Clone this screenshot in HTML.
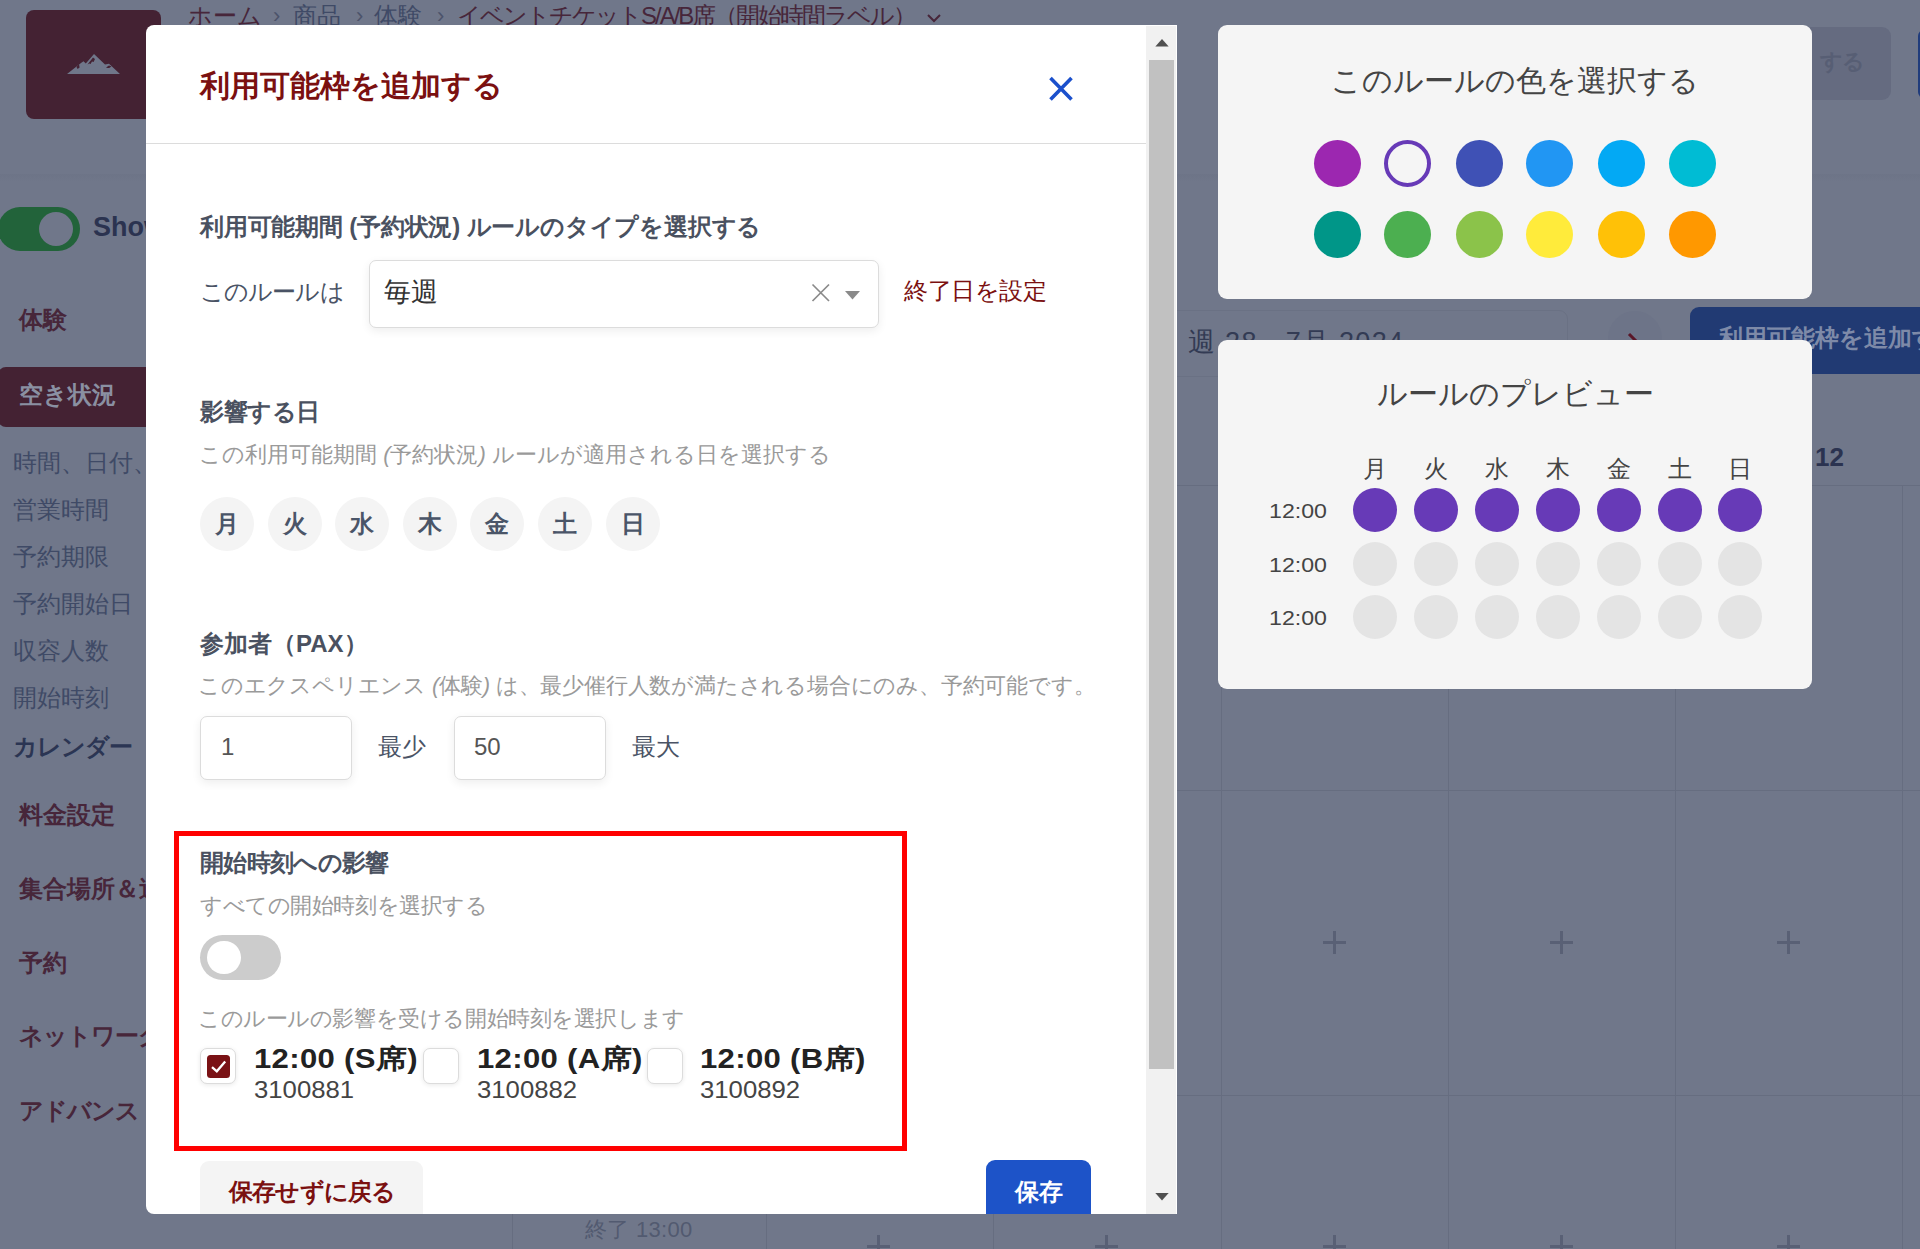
<!DOCTYPE html>
<html lang="ja">
<head>
<meta charset="utf-8">
<title>利用可能枠を追加する</title>
<style>
*{box-sizing:border-box;margin:0;padding:0}
html,body{width:1920px;height:1249px;overflow:hidden}
body{background:#70778a;font-family:"Liberation Sans",sans-serif;position:relative;color:#333}
.abs{position:absolute;white-space:nowrap}
.t{position:absolute;white-space:nowrap;line-height:40px;height:40px}
/* ---------- dimmed background page ---------- */
.bg-sub{font-size:24px;color:#3f4a66;left:13px}
.bg-main{font-size:24px;font-weight:bold;color:#47263a;left:19px}
.vline{position:absolute;width:1px;background:#666d80}
.hline{position:absolute;height:1px;background:#666d80}
.plus{position:absolute;width:23px;height:23px}
.plus:before{content:"";position:absolute;left:0;top:10.25px;width:23px;height:2.5px;background:#596075}
.plus:after{content:"";position:absolute;left:10.25px;top:0;width:2.5px;height:23px;background:#596075}
/* ---------- modal ---------- */
#modal{position:absolute;left:146px;top:25px;width:1031px;height:1189px;background:#fff;border-radius:8px 0 0 8px;overflow:hidden}
.h{font-size:24px;font-weight:bold;color:#4a5160}
.sub{font-size:22px;color:#9a9a9a}
.lbl{font-size:24px;color:#4a5365}
.inp{position:absolute;background:#fff;border:1.5px solid #dcdcdc;border-radius:7px;box-shadow:0 3px 10px rgba(0,0,0,.07)}
.day{position:absolute;top:472px;width:54px;height:54px;border-radius:50%;background:#f4f4f4;font-size:24px;font-weight:bold;color:#4a5568;text-align:center;line-height:54px}
.cb{position:absolute;top:1023px;width:36px;height:36px;border:1.5px solid #dcdcdc;border-radius:7px;background:#fff;box-shadow:0 1px 5px rgba(0,0,0,.09)}
.st1{font-size:27px;font-weight:bold;color:#222;letter-spacing:.3px;line-height:30px;height:30px;transform:scaleX(1.15);transform-origin:0 50%}
.st2{font-size:24.5px;color:#444;line-height:30px;height:30px;transform:scaleX(1.05);transform-origin:0 50%}
/* ---------- right panels ---------- */
.panel{position:absolute;left:1218px;width:594px;background:#f5f5f5;border-radius:9px}
.ptitle{font-size:30px;color:#444;width:594px;text-align:center;left:0}
.cc{position:absolute;width:47px;height:47px;border-radius:50%;margin:.5px 0 0 .5px}
.pc{position:absolute;width:44px;height:44px;border-radius:50%;background:#e4e4e4}
.pc.on{background:#673ab7}
.pd{position:absolute;font-size:24px;color:#444;width:44px;text-align:center;line-height:30px;height:30px;top:114px}
.pt{position:absolute;font-size:20.5px;color:#444;left:51px;margin-top:1px;line-height:30px;height:30px;transform:scaleX(1.13);transform-origin:0 50%}
</style>
</head>
<body>

<!-- ================= BACKGROUND (dimmed page) ================= -->
<div id="bg">
  <!-- header shadow -->
  <div class="abs" style="left:0;top:174px;width:1920px;height:8px;background:linear-gradient(#6d7487,#70778a)"></div>

  <!-- logo -->
  <div class="abs" style="left:25.6px;top:10.4px;width:135.6px;height:108.4px;background:#442233;border-radius:8px"></div>
  <svg class="abs" style="left:67px;top:53px" width="54" height="22" viewBox="0 0 54 22">
    <path d="M0 21 L14 10 L16.5 8.3 L18.8 10.4 L27 1 L38 11.4 L42 10.8 L53 21 Z" fill="#70778a"/>
    <path d="M9.5 14 L12 11 L12.6 14.4 L10.6 16 Z M20.5 11.5 L26 4.6 L28 6 L26.6 9 L25 8.5 L23.6 11 L22.4 10.4 Z M39 14.6 L42 12.6 L44.5 13.4 L42.2 15 L40.5 15 Z" fill="#442233"/>
  </svg>

  <!-- breadcrumb -->
  <div class="t" style="left:188px;top:-4px;font-size:24px;color:#47263a">ホーム</div>
  <div class="t" style="left:273px;top:-4px;font-size:22px;color:#4c536a">›</div>
  <div class="t" style="left:293px;top:-4px;font-size:24px;color:#3f4a66">商品</div>
  <div class="t" style="left:356px;top:-4px;font-size:22px;color:#4c536a">›</div>
  <div class="t" style="left:374px;top:-4px;font-size:24px;color:#3f4a66">体験</div>
  <div class="t" style="left:437px;top:-4px;font-size:22px;color:#4c536a">›</div>
  <div class="t" style="left:457px;top:-4px;font-size:24px;color:#47263a;letter-spacing:-2px">イベントチケットS/A/B席（開始時間ラベル）</div>
  <svg class="abs" style="left:926px;top:12px" width="16" height="12" viewBox="0 0 16 12"><path d="M2 3 L8 9 L14 3" fill="none" stroke="#47263a" stroke-width="2"/></svg>

  <!-- top right header buttons -->
  <div class="abs" style="left:1700px;top:27px;width:191px;height:73px;background:#656b80;border-radius:9px"></div>
  <div class="t" style="left:1820px;top:42px;font-size:22px;font-weight:bold;color:#575e74;letter-spacing:-1px">する</div>
  <div class="abs" style="left:1918px;top:30px;width:6px;height:68px;background:#203c7c;border-radius:6px 0 0 6px"></div>

  <!-- show toggle -->
  <div class="abs" style="left:-2px;top:207px;width:82px;height:44px;border-radius:22px;background:#22633a"></div>
  <div class="abs" style="left:39px;top:212px;width:34px;height:34px;border-radius:50%;background:#70778a"></div>
  <div class="t" style="left:93px;top:207px;font-size:27px;font-weight:bold;color:#2b3350">Show</div>

  <!-- sidebar -->
  <div class="t bg-main" style="top:300px">体験</div>
  <div class="abs" style="left:-2px;top:367px;width:170px;height:60px;background:#442233;border-radius:8px"></div>
  <div class="t" style="left:19px;top:375px;font-size:24px;font-weight:bold;color:#8a90a2">空き状況</div>
  <div class="t bg-sub" style="top:443px">時間、日付、</div>
  <div class="t bg-sub" style="top:490px">営業時間</div>
  <div class="t bg-sub" style="top:537px">予約期限</div>
  <div class="t bg-sub" style="top:584px">予約開始日</div>
  <div class="t bg-sub" style="top:631px">収容人数</div>
  <div class="t bg-sub" style="top:678px">開始時刻</div>
  <div class="t" style="left:13px;top:727px;font-size:24px;font-weight:bold;color:#2b3553;letter-spacing:-1px">カレンダー</div>
  <div class="t bg-main" style="top:795px">料金設定</div>
  <div class="t bg-main" style="top:869px">集合場所＆送</div>
  <div class="t bg-main" style="top:943px">予約</div>
  <div class="t bg-main" style="top:1016px;letter-spacing:-1px">ネットワーク</div>
  <div class="t bg-main" style="top:1091px;letter-spacing:-1px">アドバンス</div>

  <!-- calendar header -->
  <div class="abs" style="left:1100px;top:310px;width:468px;height:67px;border:1px solid #6a7184;border-radius:9px"></div>
  <div class="t" style="left:1188px;top:322px;font-size:27px;color:#333b54;letter-spacing:1.3px">週 28 - 7月 2024</div>
  <div class="abs" style="left:1608px;top:311px;width:54px;height:54px;border-radius:50%;background:#6d7488"></div>
  <svg class="abs" style="left:1624px;top:331px" width="20" height="24" viewBox="0 0 20 24"><path d="M5 3 L14 12 L5 21" fill="none" stroke="#5a1628" stroke-width="3"/></svg>
  <div class="abs" style="left:1690px;top:307px;width:240px;height:67px;background:#213a73;border-radius:9px"></div>
  <div class="t" style="left:1719px;top:318px;font-size:24px;font-weight:bold;color:#7e8aa8">利用可能枠を追加する</div>
  <div class="t" style="left:1815px;top:437px;font-size:26px;font-weight:bold;color:#2b3350">12</div>

  <!-- calendar grid -->
  <div class="hline" style="left:1177px;top:485px;width:743px"></div>
  <div class="hline" style="left:1177px;top:790px;width:743px"></div>
  <div class="hline" style="left:1177px;top:1095px;width:743px"></div>
  <div class="vline" style="left:512px;top:1200px;height:49px"></div>
  <div class="vline" style="left:766px;top:1200px;height:49px"></div>
  <div class="vline" style="left:993px;top:1200px;height:49px"></div>
  <div class="vline" style="left:1221px;top:485px;height:764px"></div>
  <div class="vline" style="left:1448px;top:485px;height:764px"></div>
  <div class="vline" style="left:1675px;top:485px;height:764px"></div>
  <div class="vline" style="left:1902px;top:485px;height:764px"></div>
  <div class="plus" style="left:1323px;top:931px"></div>
  <div class="plus" style="left:1550px;top:931px"></div>
  <div class="plus" style="left:1777px;top:931px"></div>
  <div class="plus" style="left:867px;top:1235px"></div>
  <div class="plus" style="left:1095px;top:1235px"></div>
  <div class="plus" style="left:1323px;top:1235px"></div>
  <div class="plus" style="left:1550px;top:1235px"></div>
  <div class="plus" style="left:1777px;top:1235px"></div>
  <div class="t" style="left:585px;top:1210px;font-size:22px;color:#525a70;letter-spacing:.3px">終了 13:00</div>
</div>

<!-- ================= MODAL ================= -->
<div id="modal">
  <!-- coordinates inside modal are page coords minus (146,25) -->
  <!-- header -->
  <div class="t" style="left:54px;top:41px;font-size:30px;font-weight:bold;color:#7b1010">利用可能枠を追加する</div>
  <svg class="abs" style="left:900px;top:48.5px" width="30" height="30" viewBox="0 0 30 30"><path d="M4.5 4 L25.5 25.5 M25.5 4 L4.5 25.5" fill="none" stroke="#1b50cc" stroke-width="3.6" stroke-linecap="butt"/></svg>
  <div class="abs" style="left:0;top:118px;width:1000px;height:1px;background:#dcdcdc"></div>

  <!-- rule type -->
  <div class="t h" style="left:54px;top:182px;letter-spacing:-0.2px">利用可能期間 (予約状況) ルールのタイプを選択する</div>
  <div class="t lbl" style="left:54px;top:247px;letter-spacing:-0.9px">このルールは</div>
  <div class="inp" style="left:223px;top:235px;width:510px;height:68px"></div>
  <div class="t" style="left:238px;top:247px;font-size:27px;color:#333">毎週</div>
  <svg class="abs" style="left:665px;top:258px" width="20" height="20" viewBox="0 0 20 20"><path d="M1.5 1.5 L18 18 M18 1.5 L1.5 18" fill="none" stroke="#8a8a8a" stroke-width="1.7"/></svg>
  <svg class="abs" style="left:699px;top:266px" width="16" height="9" viewBox="0 0 16 9"><path d="M0 0 L15 0 L7.5 8.5 Z" fill="#8a8a8a"/></svg>
  <div class="t" style="left:758px;top:246px;font-size:24px;color:#7b1010;letter-spacing:-0.5px">終了日を設定</div>

  <!-- affected days -->
  <div class="t h" style="left:54px;top:367px;letter-spacing:-0.5px">影響する日</div>
  <div class="t sub" style="left:53px;top:410px">この利用可能期間 <i>(</i>予約状況<i>)</i> ルールが適用される日を選択する</div>
  <div class="day" style="left:54px">月</div>
  <div class="day" style="left:121.6px">火</div>
  <div class="day" style="left:189.2px">水</div>
  <div class="day" style="left:256.8px">木</div>
  <div class="day" style="left:324.4px">金</div>
  <div class="day" style="left:392px">土</div>
  <div class="day" style="left:459.6px">日</div>

  <!-- pax -->
  <div class="t h" style="left:54px;top:599px">参加者（PAX）</div>
  <div class="t sub" style="left:52px;top:641px;letter-spacing:-0.2px">このエクスペリエンス <i>(</i>体験<i>)</i> は、最少催行人数が満たされる場合にのみ、予約可能です。</div>
  <div class="inp" style="left:54px;top:690.5px;width:152px;height:64px"></div>
  <div class="t" style="left:75px;top:702px;font-size:24px;color:#555">1</div>
  <div class="t lbl" style="left:232px;top:702px">最少</div>
  <div class="inp" style="left:308px;top:690.5px;width:152px;height:64px"></div>
  <div class="t" style="left:328px;top:702px;font-size:24px;color:#555">50</div>
  <div class="t lbl" style="left:486px;top:702px">最大</div>

  <!-- start time impact (red highlight box) -->
  <div class="abs" style="left:27.8px;top:805.8px;width:733.2px;height:320.7px;border:5px solid #ff0000"></div>
  <div class="t h" style="left:54px;top:818px;letter-spacing:-0.7px">開始時刻への影響</div>
  <div class="t sub" style="left:54px;top:861px;letter-spacing:-0.42px">すべての開始時刻を選択する</div>
  <div class="abs" style="left:54px;top:910px;width:81px;height:45px;border-radius:23px;background:#cccccc"></div>
  <div class="abs" style="left:61px;top:915.6px;width:33.5px;height:33.5px;border-radius:50%;background:#fff"></div>
  <div class="t sub" style="left:52px;top:973.5px;letter-spacing:-0.42px">このルールの影響を受ける開始時刻を選択します</div>

  <div class="cb" style="left:54px"></div>
  <div class="abs" style="left:61.3px;top:1030px;width:23px;height:22.5px;border-radius:3.5px;background:#7a1215"></div>
  <svg class="abs" style="left:61.3px;top:1030px" width="24" height="24" viewBox="0 0 24 24"><path d="M5 12.1 L9.8 16.3 L18.2 6.4" fill="none" stroke="#fff" stroke-width="2.3"/></svg>
  <div class="abs st1" style="left:108px;top:1019px">12:00 (S席)</div>
  <div class="abs st2" style="left:108px;top:1050px">3100881</div>

  <div class="cb" style="left:277px"></div>
  <div class="abs st1" style="left:331px;top:1019px">12:00 (A席)</div>
  <div class="abs st2" style="left:331px;top:1050px">3100882</div>

  <div class="cb" style="left:501px"></div>
  <div class="abs st1" style="left:554px;top:1019px">12:00 (B席)</div>
  <div class="abs st2" style="left:554px;top:1050px">3100892</div>

  <!-- footer buttons -->
  <div class="abs" style="left:54px;top:1136px;width:223px;height:70px;background:#f4f4f4;border-radius:9px"></div>
  <div class="t" style="left:83px;top:1147px;font-size:24px;font-weight:bold;color:#7b1010;letter-spacing:-0.8px">保存せずに戻る</div>
  <div class="abs" style="left:840px;top:1135px;width:105px;height:70px;background:#1d53c8;border-radius:9px"></div>
  <div class="t" style="left:869px;top:1147px;font-size:24px;font-weight:bold;color:#fff">保存</div>

  <!-- scrollbar -->
  <div class="abs" style="left:1000px;top:1px;width:30px;height:1188px;background:#f1f1f1"></div>
  <div class="abs" style="left:1003px;top:35px;width:25px;height:1009px;background:#c1c1c1"></div>
  <svg class="abs" style="left:1008.5px;top:13.5px" width="14" height="8" viewBox="0 0 15 9"><path d="M0 8.5 L7.5 0 L15 8.5 Z" fill="#505050"/></svg>
  <svg class="abs" style="left:1008.5px;top:1167.5px" width="14" height="8" viewBox="0 0 15 9"><path d="M0 0 L15 0 L7.5 8.5 Z" fill="#505050"/></svg>
</div>

<!-- ================= RIGHT PANELS ================= -->
<div class="panel" id="colors" style="top:25px;height:274px">
  <div class="t ptitle" style="top:36px">このルールの色を選択する</div>
  <div class="cc" style="left:95.2px;top:114.7px;background:#9c27b0"></div>
  <div class="cc" style="left:165.7px;top:114.7px;border:4.5px solid #673ab7;background:#f5f5f5"></div>
  <div class="cc" style="left:237.4px;top:114.7px;background:#3f51b5"></div>
  <div class="cc" style="left:307.9px;top:114.7px;background:#2196f3"></div>
  <div class="cc" style="left:379.5px;top:114.7px;background:#03a9f4"></div>
  <div class="cc" style="left:450.0px;top:114.7px;background:#00bcd4"></div>
  <div class="cc" style="left:95.2px;top:185.2px;background:#009688"></div>
  <div class="cc" style="left:165.7px;top:185.2px;background:#4caf50"></div>
  <div class="cc" style="left:237.4px;top:185.2px;background:#8bc34a"></div>
  <div class="cc" style="left:307.9px;top:185.2px;background:#ffeb3b"></div>
  <div class="cc" style="left:379.5px;top:185.2px;background:#ffc107"></div>
  <div class="cc" style="left:450.0px;top:185.2px;background:#ff9800"></div>
</div>
<div class="panel" id="preview" style="top:340px;height:349px">
  <div class="t ptitle" style="top:34px">ルールのプレビュー</div>
  <div class="pd" style="left:134.6px">月</div>
  <div class="pd" style="left:196.3px">火</div>
  <div class="pd" style="left:256.8px">水</div>
  <div class="pd" style="left:318.1px">木</div>
  <div class="pd" style="left:378.6px">金</div>
  <div class="pd" style="left:439.9px">土</div>
  <div class="pd" style="left:500.4px">日</div>
  <div class="pt" style="top:155px">12:00</div>
  <div class="pc on" style="left:134.6px;top:148px"></div>
  <div class="pc on" style="left:196.3px;top:148px"></div>
  <div class="pc on" style="left:256.8px;top:148px"></div>
  <div class="pc on" style="left:318.1px;top:148px"></div>
  <div class="pc on" style="left:378.6px;top:148px"></div>
  <div class="pc on" style="left:439.9px;top:148px"></div>
  <div class="pc on" style="left:500.4px;top:148px"></div>
  <div class="pt" style="top:209px">12:00</div>
  <div class="pc" style="left:134.6px;top:202px"></div>
  <div class="pc" style="left:196.3px;top:202px"></div>
  <div class="pc" style="left:256.8px;top:202px"></div>
  <div class="pc" style="left:318.1px;top:202px"></div>
  <div class="pc" style="left:378.6px;top:202px"></div>
  <div class="pc" style="left:439.9px;top:202px"></div>
  <div class="pc" style="left:500.4px;top:202px"></div>
  <div class="pt" style="top:261.8px">12:00</div>
  <div class="pc" style="left:134.6px;top:254.8px"></div>
  <div class="pc" style="left:196.3px;top:254.8px"></div>
  <div class="pc" style="left:256.8px;top:254.8px"></div>
  <div class="pc" style="left:318.1px;top:254.8px"></div>
  <div class="pc" style="left:378.6px;top:254.8px"></div>
  <div class="pc" style="left:439.9px;top:254.8px"></div>
  <div class="pc" style="left:500.4px;top:254.8px"></div>
</div>

</body>
</html>
